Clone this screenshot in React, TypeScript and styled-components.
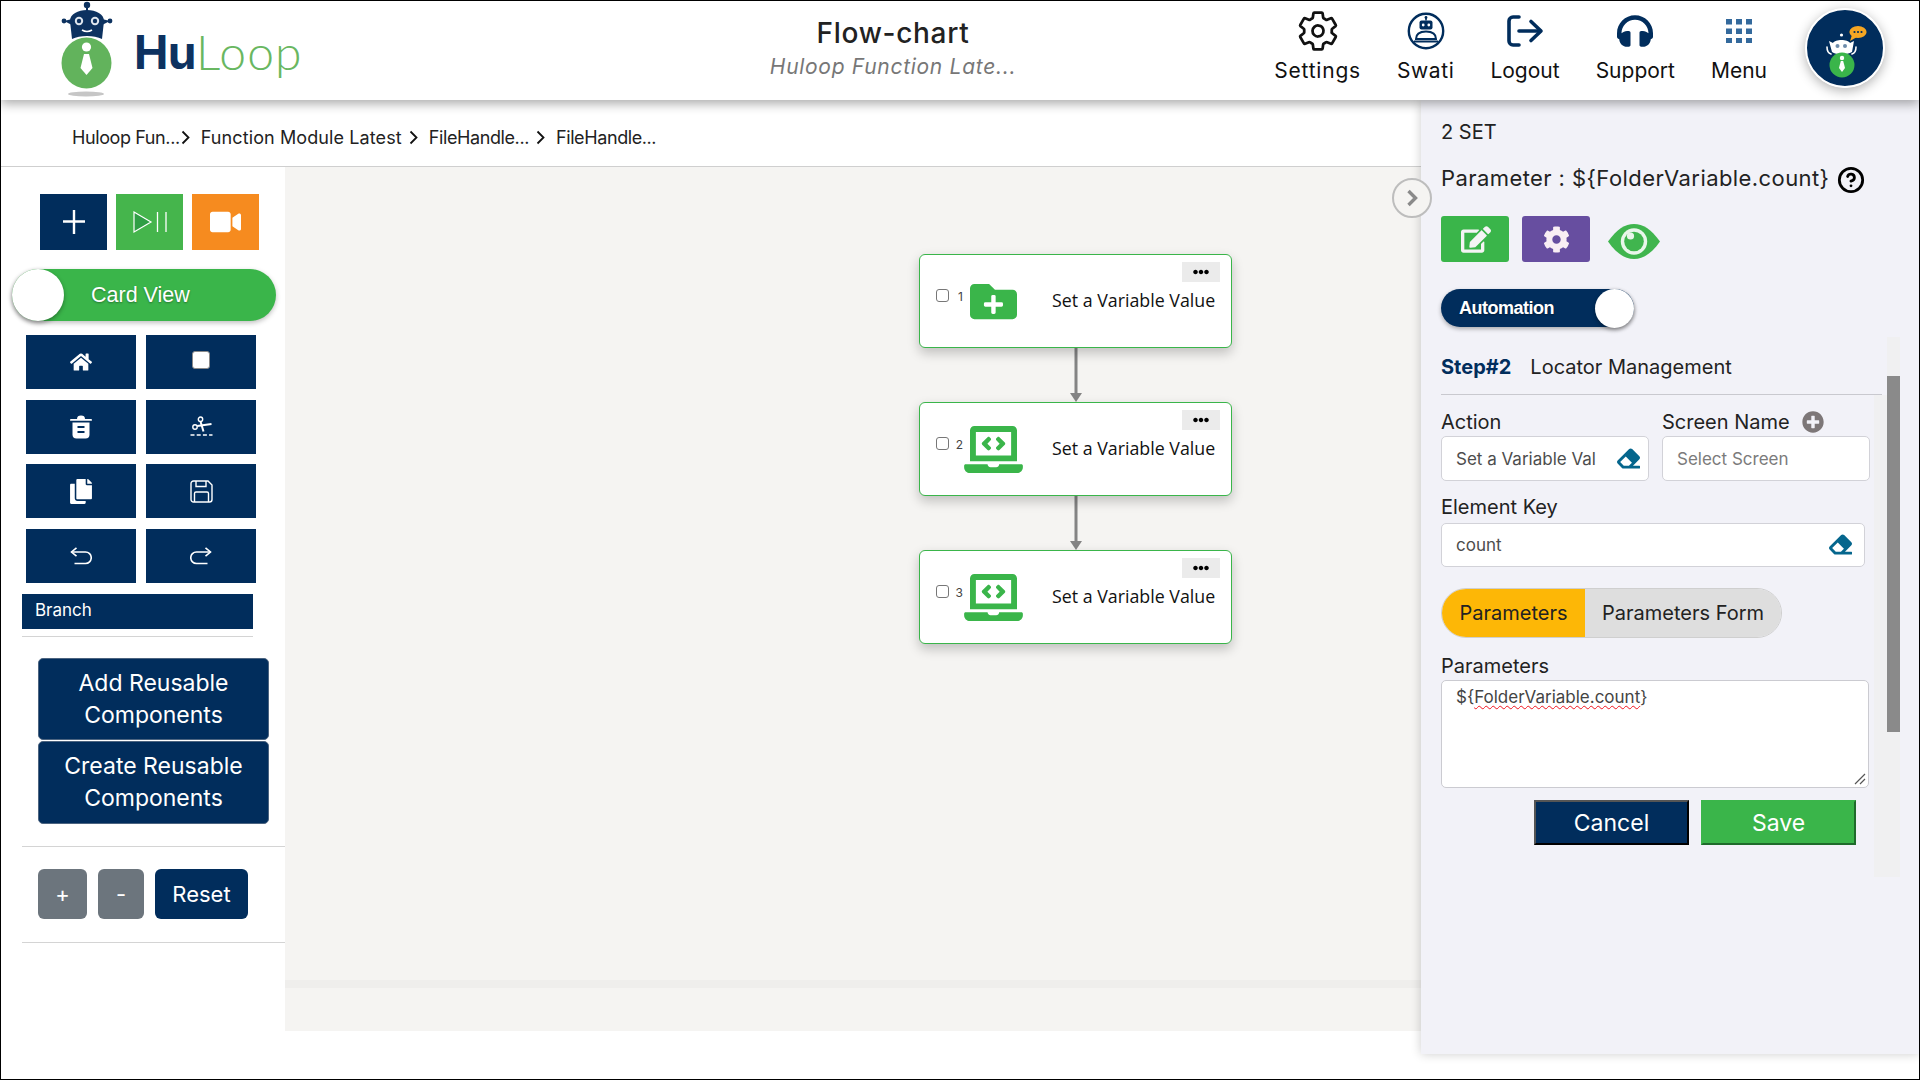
import React from "react"
import styled, { createGlobalStyle } from "styled-components"
import { FaCog, FaCopy, FaEdit, FaEllipsisH, FaEraser, FaFolderPlus, FaHeadphones, FaHome, FaLaptopCode, FaPlusCircle, FaVideo } from "react-icons/fa"
import { IoSettingsOutline } from "react-icons/io5"
import { CircleHelp } from "lucide-react"

const NAVY = "#012d5c"
const GREEN = "#3ab54a"

const GlobalStyle = createGlobalStyle`
  html, body { margin: 0; padding: 0; background: #fff; }
  body { font-family: Inter, "Noto Sans", sans-serif; color: #222; }
  * { box-sizing: border-box; }
`

const Frame = styled.div`
  width: 1920px;
  height: 1080px;
  border: 1px solid #000;
  background: #fff;
  display: flex;
  flex-direction: column;
  overflow: hidden;
`

/* header */
const Header = styled.header`
  height: 99px;
  flex: none;
  display: flex;
  position: relative;
  z-index: 3;
  background: #fff;
  box-shadow: 0 4px 10px rgba(0, 0, 0, 0.32);
`
const Brand = styled.div`
  width: 642px;
  flex: none;
  padding-left: 57px;
  display: flex;
  align-items: flex-start;
`
const BrandName = styled.div`
  margin: 24px 0 0 19px;
  font-size: 46px;
  line-height: 54px;
  display: flex;
`
const BrandHu = styled.span`
  color: #0d3260;
  font-weight: 700;
  letter-spacing: -0.5px;
`
const BrandLoop = styled.span`
  font-family: Lato, sans-serif;
  color: #69b761;
  font-weight: 300;
  font-size: 48px;
  letter-spacing: 1.2px;
`
const TitleBlock = styled.div`
  width: 500px;
  flex: none;
  text-align: center;
  padding-top: 16px;
`
const PageTitle = styled.div`
  font-size: 28px;
  line-height: 32px;
  font-weight: 500;
  letter-spacing: 0.7px;
  color: #222;
`
const PageSub = styled.div`
  margin-top: 2px;
  font-size: 21px;
  line-height: 32px;
  font-style: italic;
  letter-spacing: 0.7px;
  color: #777;
`
const Nav = styled.nav`
  margin-left: auto;
  display: flex;
  gap: 36px;
  padding-top: 10px;
`
const NavItem = styled.div`
  display: flex;
  flex-direction: column;
  align-items: center;
`
const NavIconBox = styled.div`
  height: 40px;
  display: flex;
  align-items: center;
  justify-content: center;
`
const NavLabel = styled.div<{ $spread?: number }>`
  margin-top: 6px;
  font-size: 21px;
  line-height: 28px;
  letter-spacing: ${({ $spread }) => $spread ?? 0}px;
  color: #111;
`
const GearIcon = styled(IoSettingsOutline)`
  width: 44px;
  height: 44px;
  color: #111;
`
const HeadphoneIcon = styled(FaHeadphones)`
  width: 36px;
  height: 36px;
  color: ${NAVY};
`
const Avatar = styled.svg`
  width: 80px;
  height: 80px;
  margin: 7px 34px 0 38px;
  flex: none;
  border-radius: 50%;
  box-shadow: 0 3px 12px rgba(0, 0, 0, 0.3);
`

/* page body */
const Body = styled.div`
  flex: 1;
  display: flex;
  align-items: flex-start;
  min-height: 0;
`
const Main = styled.div`
  width: 1420px;
  flex: none;
`
const Breadcrumbs = styled.div`
  height: 67px;
  padding: 9px 0 0 71px;
  display: flex;
  align-items: center;
  border-bottom: 1px solid #cfcfcf;
`
const Crumb = styled.span<{ $short?: boolean }>`
  font-size: 18px;
  line-height: 24px;
  color: #222;
  letter-spacing: ${({ $short }) => ($short ? "-0.4px" : "0.1px")};
`
const CrumbChevron = styled.svg<{ $tight?: boolean }>`
  width: 9px;
  height: 15px;
  margin: 0 11px 0 ${({ $tight }) => ($tight ? "1px" : "7px")};
  flex: none;
`
const Workspace = styled.div`
  display: flex;
  height: 864px;
`

/* left tools */
const Sidebar = styled.aside`
  width: 284px;
  flex: none;
  background: #fff;
`
const RunRow = styled.div`
  margin: 27px 0 0 39px;
  display: flex;
  gap: 9px;
`
const RunButton = styled.button<{ $bg: string }>`
  width: 67px;
  height: 56px;
  border: none;
  padding: 0;
  background: ${({ $bg }) => $bg};
  display: flex;
  align-items: center;
  justify-content: center;
`
const VideoIcon = styled(FaVideo)`
  width: 31px;
  height: 28px;
  color: #fff;
`
const ViewToggle = styled.div`
  margin: 19px 0 0 11px;
  width: 264px;
  height: 52px;
  border-radius: 26px;
  background: ${GREEN};
  display: flex;
  align-items: center;
  box-shadow: 0 2px 5px rgba(0, 0, 0, 0.25);
`
const ToggleKnob = styled.div<{ $size: number }>`
  width: ${({ $size }) => $size}px;
  height: ${({ $size }) => $size}px;
  flex: none;
  border-radius: 50%;
  background: #fff;
  box-shadow: 0 2px 4px rgba(0, 0, 0, 0.35);
`
const ToggleLabel = styled.span`
  margin-left: 27px;
  font-family: "Liberation Sans", Arial, sans-serif;
  font-size: 21.5px;
  color: #fff;
  text-shadow: 0 1px 2px rgba(0, 0, 0, 0.35);
`
const ToolGrid = styled.div`
  margin: 14px 0 0 25px;
  display: grid;
  grid-template-columns: 110px 110px;
  grid-auto-rows: 54px;
  column-gap: 10px;
  row-gap: 10.67px;
`
const ToolButton = styled.button`
  border: none;
  padding: 0;
  background: ${NAVY};
  display: flex;
  align-items: center;
  justify-content: center;
`
const HomeIcon = styled(FaHome)`
  width: 22px;
  height: 20px;
  color: #fff;
`
const StopBox = styled.span`
  width: 18px;
  height: 18px;
  margin-bottom: 4px;
  background: #fff;
  border: 1px solid #8a8a8a;
  border-radius: 3px;
`
const CopyIcon = styled(FaCopy)`
  width: 22px;
  height: 25px;
  color: #fff;
`
const FlipSvg = styled.svg<{ $flip?: boolean }>`
  width: 22px;
  height: 18px;
  transform: ${({ $flip }) => ($flip ? "scaleX(-1)" : "none")};
`
const BranchBar = styled.div`
  margin: 11px 0 0 21px;
  width: 231px;
  height: 35px;
  padding-left: 13px;
  background: ${NAVY};
  color: #fff;
  font-size: 17px;
  line-height: 33px;
`
const SideRule = styled.div<{ $width: number; $top: number }>`
  width: ${({ $width }) => $width}px;
  height: 1px;
  margin: ${({ $top }) => $top}px 0 0 21px;
  background: #d4d4d4;
`
const ReusableButton = styled.button<{ $top: number; $height: number }>`
  display: block;
  width: 231px;
  height: ${({ $height }) => $height}px;
  margin: ${({ $top }) => $top}px 0 0 37px;
  padding: 0 16px;
  border: 1px solid #4c6480;
  border-radius: 5px;
  background: ${NAVY};
  color: #fff;
  font-family: inherit;
  font-size: 23px;
  line-height: 32px;
`
const ZoomRow = styled.div`
  margin: 22px 0 0 37px;
  display: flex;
  gap: 11px;
`
const ZoomButton = styled.button<{ $width: number; $bg: string }>`
  width: ${({ $width }) => $width}px;
  height: 50px;
  border: none;
  border-radius: 6px;
  padding: 0;
  background: ${({ $bg }) => $bg};
  color: #fff;
  font-family: inherit;
  font-size: 22px;
`

/* canvas */
const Canvas = styled.div`
  flex: 1;
  background: #f5f4f2;
  position: relative;
`
const NodeArea = styled.div`
  height: 813px;
  padding: 87px 0 0 634px;
  display: flex;
  flex-direction: column;
  align-items: flex-start;
`
const ScrollBand = styled.div`
  height: 8px;
  background: #efeeec;
`
const NodeCard = styled.div`
  position: relative;
  width: 313px;
  height: 94px;
  flex: none;
  display: flex;
  align-items: center;
  padding-left: 16px;
  background: #fff;
  border: 1px solid ${GREEN};
  border-radius: 6px;
  box-shadow: 0 5px 12px rgba(0, 0, 0, 0.22);
`
const NodeCheck = styled.span`
  width: 13px;
  height: 13px;
  margin-bottom: 11px;
  flex: none;
  border: 1.5px solid #777;
  border-radius: 3px;
  background: #fff;
`
const NodeNumber = styled.span`
  width: 14px;
  margin-bottom: 9px;
  flex: none;
  text-align: right;
  font-size: 12px;
  color: #444;
`
const NodeIconBox = styled.div`
  width: 61px;
  flex: none;
  display: flex;
  justify-content: center;
`
const FolderIcon = styled(FaFolderPlus)`
  width: 47px;
  height: 47px;
  color: ${GREEN};
`
const LaptopIcon = styled(FaLaptopCode)`
  width: 59px;
  height: 47px;
  color: ${GREEN};
`
const NodeTitle = styled.span`
  margin: 0 0 2px 28px;
  font-family: "Open Sans", sans-serif;
  font-size: 17.8px;
  color: #111;
  white-space: nowrap;
`
const NodeMenu = styled.div`
  position: absolute;
  top: 7px;
  right: 11px;
  width: 38px;
  height: 20px;
  background: #ebebeb;
  display: flex;
  align-items: center;
  justify-content: center;
`
const DotsIcon = styled(FaEllipsisH)`
  width: 16px;
  height: 16px;
  color: #000;
`
const Connector = styled.svg`
  width: 14px;
  height: 54px;
  flex: none;
  margin-left: 149.5px;
  display: block;
`
const CollapseButton = styled.div`
  position: absolute;
  top: 11px;
  right: -11px;
  z-index: 2;
  width: 40px;
  height: 40px;
  border: 2px solid #bdbdbd;
  border-radius: 50%;
  background: #f5f4f2;
  display: flex;
  align-items: center;
  justify-content: center;
`

/* right panel */
const Panel = styled.section`
  width: 498px;
  height: 954px;
  flex: none;
  position: relative;
  z-index: 1;
  padding-top: 18px;
  background: #f2f2f8;
  box-shadow: 0 0 10px rgba(0, 0, 0, 0.2);
`
const PanelHead = styled.div`
  padding-left: 20px;
`
const StepTitle = styled.div`
  font-size: 20px;
  line-height: 28px;
  color: #222;
`
const ParameterRow = styled.div`
  margin-top: 17px;
  height: 30px;
  display: flex;
  align-items: center;
  font-size: 22px;
  line-height: 30px;
  letter-spacing: 0.42px;
  color: #222;
`
const HelpIcon = styled(CircleHelp)`
  width: 28px;
  height: 28px;
  margin: 3px 0 0 8px;
  color: #000;
`
const ActionRow = styled.div`
  margin-top: 23px;
  display: flex;
  gap: 13px;
`
const ActionButton = styled.button<{ $bg: string }>`
  width: 68px;
  height: 46px;
  border: none;
  border-radius: 3px;
  padding: 0;
  background: ${({ $bg }) => $bg};
  display: flex;
  align-items: center;
  justify-content: center;
`
const EditIcon = styled(FaEdit)`
  width: 30px;
  height: 27px;
  margin-left: 2px;
  color: #f4f4f4;
`
const CogIcon = styled(FaCog)`
  width: 27px;
  height: 27px;
  color: #f9eef4;
`
const EyeSvg = styled.svg`
  width: 52px;
  height: 35px;
  margin: 8px 0 0 5px;
`
const AutomationToggle = styled.div`
  margin-top: 27px;
  width: 193px;
  height: 38px;
  border-radius: 19px;
  background: ${NAVY};
  display: flex;
  align-items: center;
  justify-content: space-between;
  padding-left: 18px;
  box-shadow: 0 2px 4px rgba(0, 0, 0, 0.3);
`
const AutomationLabel = styled.span`
  font-family: "Liberation Sans", Arial, sans-serif;
  font-size: 18px;
  font-weight: 700;
  letter-spacing: -0.5px;
  color: #fff;
  text-shadow: 0 1px 2px rgba(0, 0, 0, 0.4);
`
const Scroller = styled.div`
  margin-top: 10px;
  height: 540px;
  display: flex;
`
const FormColumn = styled.div`
  width: 453px;
  flex: none;
  padding: 15px 0 0 20px;
`
const StepRow = styled.div`
  display: flex;
  gap: 19px;
  font-size: 20px;
  line-height: 30px;
`
const StepNumber = styled.span`
  color: ${NAVY};
  font-weight: 700;
`
const StepRule = styled.div`
  width: 441px;
  height: 1px;
  margin-top: 12px;
  background: #c9c9cf;
`
const TwoColumns = styled.div`
  margin-top: 13px;
  display: flex;
  gap: 13px;
`
const FieldColumn = styled.div`
  width: 208px;
  flex: none;
`
const FieldLabel = styled.div<{ $top?: number }>`
  margin-top: ${({ $top }) => $top ?? 0}px;
  height: 28px;
  display: flex;
  align-items: center;
  font-size: 20px;
  line-height: 28px;
  color: #222;
`
const AddScreenIcon = styled(FaPlusCircle)`
  width: 22px;
  height: 22px;
  margin-left: 12px;
  color: #7d7778;
`
const InputBox = styled.div<{ $width: number; $height: number; $top?: number; $end: number }>`
  width: ${({ $width }) => $width}px;
  height: ${({ $height }) => $height}px;
  margin-top: ${({ $top }) => $top ?? 0}px;
  padding: 0 ${({ $end }) => $end}px 0 14px;
  display: flex;
  align-items: center;
  justify-content: space-between;
  background: #fff;
  border: 1px solid #d2d2d8;
  border-radius: 5px;
`
const InputText = styled.span<{ $muted?: boolean }>`
  font-size: 17px;
  color: ${({ $muted }) => ($muted ? "#7b7b7b" : "#4d4d4d")};
`
const EraserIcon = styled(FaEraser)`
  width: 23px;
  height: 23px;
  margin-top: -1px;
  color: #05668d;
`
const Tabs = styled.div`
  margin-top: 21px;
  width: 341px;
  height: 50px;
  display: flex;
  border: 1px solid #cfcfcf;
  border-radius: 25px;
  overflow: hidden;
`
const Tab = styled.div<{ $active?: boolean }>`
  flex: ${({ $active }) => ($active ? "none" : 1)};
  width: ${({ $active }) => ($active ? "143px" : "auto")};
  display: flex;
  align-items: center;
  justify-content: center;
  background: ${({ $active }) => ($active ? "#fdb706" : "#dedede")};
  font-size: 20px;
  color: #222;
`
const TextArea = styled.div`
  position: relative;
  width: 428px;
  height: 108px;
  padding: 4px 14px;
  background: #fff;
  border: 1px solid #cbcbd1;
  border-radius: 5px;
  font-size: 17px;
  line-height: 24px;
  color: #444;
`
const Misspelled = styled.span`
  text-decoration: underline wavy #f0141e;
  text-decoration-thickness: 1px;
  text-underline-offset: 2px;
`
const ResizeGrip = styled.svg`
  position: absolute;
  right: 2px;
  bottom: 2px;
  width: 12px;
  height: 12px;
`
const ButtonRow = styled.div`
  margin: 12px 0 0 93px;
  display: flex;
  gap: 12px;
`
const FormButton = styled.button<{ $bg: string; $light: string; $dark: string }>`
  width: 155px;
  height: 45px;
  padding: 0;
  background: ${({ $bg }) => $bg};
  border-style: solid;
  border-width: 2px;
  border-color: ${({ $light }) => $light} ${({ $dark }) => $dark} ${({ $dark }) => $dark} ${({ $light }) => $light};
  color: #fff;
  font-family: inherit;
  font-size: 23px;
`
const Gutter = styled.div`
  width: 13px;
  margin-top: 58px;
  flex: none;
  background: #f0f0f1;
`
const ScrollTrack = styled.div`
  width: 13px;
  flex: none;
  padding-top: 39px;
  background: #f0f0f1;
`
const ScrollThumb = styled.div`
  height: 356px;
  background: #8a8a8a;
`

const LogoMark = () => (
  <svg width="57" height="98" viewBox="0 0 57 98" style={{ flex: "none" }}>
    <g fill="#0d3260">
      <circle cx="29" cy="4" r="3.2" />
      <rect x="28" y="5" width="2" height="6" />
      <circle cx="6" cy="20" r="2.4" />
      <circle cx="52" cy="20" r="2.4" />
      <path d="M6 20 L14 18 L14 24Z M52 20 L44 18 L44 24Z" />
      <path d="M12 20 C12 13 20 9 29 9 C38 9 46 13 46 20 L44 38 C36 34 22 34 14 38Z" />
    </g>
    <circle cx="21" cy="20" r="4.2" fill="#dfe6ee" />
    <circle cx="37" cy="20" r="4.2" fill="#dfe6ee" />
    <circle cx="21" cy="20" r="2.2" fill="#0d3260" />
    <circle cx="37" cy="20" r="2.2" fill="#0d3260" />
    <path d="M24 29 Q29 32 34 29" fill="none" stroke="#fff" strokeWidth="1.6" />
    <ellipse cx="28.5" cy="62" rx="25" ry="25.5" fill="#62b35c" />
    <circle cx="28.5" cy="46" r="4.6" fill="#fff" />
    <path d="M26 53 H31 L34.5 67 L28.5 74 L22.5 67Z" fill="#fff" />
    <ellipse cx="28" cy="93" rx="18" ry="2.4" fill="#c6c6c6" />
  </svg>
)

const RobotBadge = () => (
  <svg width="38" height="38" viewBox="0 0 38 38">
    <circle cx="19" cy="19" r="17.2" fill="#fff" stroke={NAVY} strokeWidth="2.4" />
    <rect x="18.2" y="5.5" width="1.6" height="3" fill={NAVY} />
    <circle cx="19" cy="5.5" r="1.4" fill={NAVY} />
    <rect x="12.5" y="8.5" width="13" height="9" rx="2" fill={NAVY} />
    <circle cx="16.2" cy="13" r="1.4" fill="#fff" />
    <circle cx="21.8" cy="13" r="1.4" fill="#fff" />
    <path d="M9 27 C9 21 14 19.5 19 19.5 C24 19.5 29 21 29 27Z" fill="none" stroke={NAVY} strokeWidth="2" />
    <path d="M7 29.5 H31" stroke={NAVY} strokeWidth="2" />
  </svg>
)

const LogoutMark = () => (
  <svg width="37" height="32" viewBox="0 0 37 32" fill="none" stroke={NAVY} strokeWidth="3.6" strokeLinecap="round" strokeLinejoin="round">
    <path d="M12 2 H6 A4 4 0 0 0 2 6 V26 A4 4 0 0 0 6 30 H12" />
    <path d="M12 16 H33" />
    <path d="M24 6.5 L34 16 L24 25.5" />
  </svg>
)

const MenuGrid = () => (
  <svg width="26" height="24" viewBox="0 0 26 24" fill="#33699c">
    {[0, 9.5, 19].map((y) =>
      [0, 10, 20].map((x) => <rect key={`${x}-${y}`} x={x} y={y} width="6" height="5.5" />)
    )}
  </svg>
)

const AssistantAvatar = () => (
  <Avatar viewBox="0 0 80 80">
    <circle cx="40" cy="40" r="39" fill={NAVY} stroke="#fff" strokeWidth="2" />
    <ellipse cx="53" cy="24" rx="8.6" ry="6" fill="#f5a623" />
    <path d="M47 27 L45 33 L52 29Z" fill="#f5a623" />
    <g fill={NAVY}>
      <circle cx="49.5" cy="24" r="1.1" />
      <circle cx="53" cy="24" r="1.1" />
      <circle cx="56.5" cy="24" r="1.1" />
    </g>
    <path d="M22 39 Q22 45 26 46 M51 39 Q51 45 47 46" fill="none" stroke="#fff" strokeWidth="1.6" strokeLinecap="round" />
    <circle cx="36.5" cy="27" r="1.6" fill="#fff" />
    <path d="M24 33 L28 35 C30 31 43 31 45 35 L49 33 L47 44 C42 47 31 47 27 44Z" fill="#fff" />
    <circle cx="32.5" cy="38" r="2" fill="#6d8cab" />
    <circle cx="40" cy="38" r="2" fill="#6d8cab" />
    <circle cx="37" cy="57" r="12.5" fill={GREEN} />
    <circle cx="37" cy="50" r="2.2" fill="#fff" />
    <path d="M35.8 53 H38.2 L40 60 L37 64 L34 60Z" fill="#fff" />
  </Avatar>
)

const Chevron = ({ tight }: { tight?: boolean }) => (
  <CrumbChevron $tight={tight} viewBox="0 0 9 15">
    <path d="M1.5 1.5 L7.5 7.5 L1.5 13.5" fill="none" stroke="#111" strokeWidth="1.8" />
  </CrumbChevron>
)

const PlusMark = () => (
  <svg width="24" height="26" viewBox="0 0 24 26">
    <path d="M12 1 V25 M1 12.5 H23" stroke="#fff" strokeWidth="2.4" />
  </svg>
)

const PlayPauseMark = () => (
  <svg width="36" height="24" viewBox="0 0 36 24" fill="none">
    <path d="M2 2 L19 12 L2 22Z" fill="#2f9e44" stroke="#fff" strokeWidth="1.2" />
    <path d="M25.5 2 V22 M34 2 V22" stroke="#fff" strokeWidth="1.3" />
  </svg>
)

const TrashMark = () => (
  <svg width="22" height="24" viewBox="0 0 22 24" fill="#fff">
    <path d="M7 4 A4 3.4 0 0 1 15 4Z" />
    <rect x="0" y="4" width="22" height="1.8" rx="0.9" />
    <path d="M2.5 7.5 H19.5 V19.5 A4 4 0 0 1 15.5 23.5 H6.5 A4 4 0 0 1 2.5 19.5Z" />
    <rect x="7.5" y="11" width="7" height="2" fill={NAVY} />
    <rect x="7.5" y="16" width="7" height="2" fill={NAVY} />
  </svg>
)

const CutMark = () => (
  <svg width="23" height="21" viewBox="0 0 23 21" fill="none" stroke="#fff">
    <circle cx="10.5" cy="3.2" r="2.2" strokeWidth="1.4" />
    <circle cx="5" cy="11" r="2.2" strokeWidth="1.4" />
    <path d="M10.5 5.5 L13.5 15.5" strokeWidth="2" />
    <path d="M7.2 10 L21.5 8" strokeWidth="2" />
    <path d="M0.5 19 H22.5" strokeWidth="1.6" strokeDasharray="4 2.2" />
  </svg>
)

const SaveMark = () => (
  <svg width="23" height="23" viewBox="0 0 23 23" fill="none" stroke="#fff" strokeWidth="1.4">
    <path d="M3.5 1 H18 L22 5 V19.5 A2.5 2.5 0 0 1 19.5 22 H3.5 A2.5 2.5 0 0 1 1 19.5 V3.5 A2.5 2.5 0 0 1 3.5 1Z" />
    <path d="M6 1 V6.5 H16 V1" />
    <path d="M4.5 22 V13.5 A1.5 1.5 0 0 1 6 12 H17 A1.5 1.5 0 0 1 18.5 13.5 V22" />
  </svg>
)

const TurnArrow = ({ flip }: { flip?: boolean }) => (
  <FlipSvg $flip={flip} viewBox="0 0 22 18" fill="none" stroke="#fff" strokeWidth="1.6">
    <path d="M1.5 5 H15.5 A5.7 5.7 0 0 1 15.5 16.5 H4.5" />
    <path d="M6.5 0.8 L1.5 5 L6.5 9.2" />
  </FlipSvg>
)

const EyeMark = () => (
  <EyeSvg viewBox="0 0 52 35">
    <path d="M0 17.5 C9 5 17 0 26 0 C35 0 43 5 52 17.5 C43 30 35 35 26 35 C17 35 9 30 0 17.5Z" fill="#40b54e" />
    <circle cx="26" cy="17.5" r="13.2" fill="#e9f6ea" />
    <circle cx="26" cy="17.5" r="9.8" fill="#40b54e" />
    <circle cx="22.5" cy="12" r="3.6" fill="#e9f6ea" />
  </EyeSvg>
)

const ArrowLink = () => (
  <Connector viewBox="0 0 14 54">
    <rect x="5.5" y="0" width="3" height="46" fill="#848484" />
    <path d="M1 45 H13 L7 54Z" fill="#848484" />
  </Connector>
)

const steps = [
  { id: 1, icon: <FolderIcon /> },
  { id: 2, icon: <LaptopIcon /> },
  { id: 3, icon: <LaptopIcon /> },
]

const toolIcons = [
  <HomeIcon key="home" />,
  <StopBox key="stop" />,
  <TrashMark key="trash" />,
  <CutMark key="cut" />,
  <CopyIcon key="copy" />,
  <SaveMark key="save" />,
  <TurnArrow key="undo" />,
  <TurnArrow key="redo" flip />,
]

export default function App() {
  return (
    <Frame>
      <GlobalStyle />
      <Header>
        <Brand>
          <LogoMark />
          <BrandName>
            <BrandHu>Hu</BrandHu>
            <BrandLoop>Loop</BrandLoop>
          </BrandName>
        </Brand>
        <TitleBlock>
          <PageTitle>Flow-chart</PageTitle>
          <PageSub>Huloop Function Late...</PageSub>
        </TitleBlock>
        <Nav>
          <NavItem>
            <NavIconBox><GearIcon /></NavIconBox>
            <NavLabel $spread={0.8}>Settings</NavLabel>
          </NavItem>
          <NavItem>
            <NavIconBox><RobotBadge /></NavIconBox>
            <NavLabel $spread={0.6}>Swati</NavLabel>
          </NavItem>
          <NavItem>
            <NavIconBox><LogoutMark /></NavIconBox>
            <NavLabel>Logout</NavLabel>
          </NavItem>
          <NavItem>
            <NavIconBox><HeadphoneIcon /></NavIconBox>
            <NavLabel>Support</NavLabel>
          </NavItem>
          <NavItem>
            <NavIconBox><MenuGrid /></NavIconBox>
            <NavLabel>Menu</NavLabel>
          </NavItem>
        </Nav>
        <AssistantAvatar />
      </Header>

      <Body>
        <Main>
          <Breadcrumbs>
            <Crumb $short>Huloop Fun...</Crumb>
            <Chevron tight />
            <Crumb>Function Module Latest</Crumb>
            <Chevron />
            <Crumb $short>FileHandle...</Crumb>
            <Chevron />
            <Crumb $short>FileHandle...</Crumb>
          </Breadcrumbs>
          <Workspace>
            <Sidebar>
              <RunRow>
                <RunButton $bg={NAVY}><PlusMark /></RunButton>
                <RunButton $bg="#45b54c"><PlayPauseMark /></RunButton>
                <RunButton $bg="#f68b1f"><VideoIcon /></RunButton>
              </RunRow>
              <ViewToggle>
                <ToggleKnob $size={52} />
                <ToggleLabel>Card View</ToggleLabel>
              </ViewToggle>
              <ToolGrid>
                {toolIcons.map((icon, i) => (
                  <ToolButton key={i}>{icon}</ToolButton>
                ))}
              </ToolGrid>
              <BranchBar>Branch</BranchBar>
              <SideRule $width={231} $top={7} />
              <ReusableButton $top={21} $height={82}>Add Reusable Components</ReusableButton>
              <ReusableButton $top={1} $height={83}>Create Reusable Components</ReusableButton>
              <SideRule $width={263} $top={22} />
              <ZoomRow>
                <ZoomButton $width={49} $bg="#6c757d">+</ZoomButton>
                <ZoomButton $width={46} $bg="#6c757d">-</ZoomButton>
                <ZoomButton $width={93} $bg={NAVY}>Reset</ZoomButton>
              </ZoomRow>
              <SideRule $width={263} $top={23} />
            </Sidebar>
            <Canvas>
              <NodeArea>
                {steps.map((step, i) => (
                  <React.Fragment key={step.id}>
                    {i > 0 && <ArrowLink />}
                    <NodeCard>
                      <NodeCheck />
                      <NodeNumber>{step.id}</NodeNumber>
                      <NodeIconBox>{step.icon}</NodeIconBox>
                      <NodeTitle>Set a Variable Value</NodeTitle>
                      <NodeMenu><DotsIcon /></NodeMenu>
                    </NodeCard>
                  </React.Fragment>
                ))}
              </NodeArea>
              <ScrollBand />
              <CollapseButton>
                <svg width="12" height="18" viewBox="0 0 12 18">
                  <path d="M2.5 2 L9.5 9 L2.5 16" fill="none" stroke="#8a8a8a" strokeWidth="3.4" />
                </svg>
              </CollapseButton>
            </Canvas>
          </Workspace>
        </Main>

        <Panel>
          <PanelHead>
            <StepTitle>2 SET</StepTitle>
            <ParameterRow>
              Parameter : ${"{"}FolderVariable.count{"}"}
              <HelpIcon strokeWidth={2.4} />
            </ParameterRow>
            <ActionRow>
              <ActionButton $bg={GREEN}><EditIcon /></ActionButton>
              <ActionButton $bg="#674ea0"><CogIcon /></ActionButton>
              <EyeMark />
            </ActionRow>
            <AutomationToggle>
              <AutomationLabel>Automation</AutomationLabel>
              <ToggleKnob $size={39} />
            </AutomationToggle>
          </PanelHead>
          <Scroller>
            <FormColumn>
              <StepRow>
                <StepNumber>Step#2</StepNumber>
                <span>Locator Management</span>
              </StepRow>
              <StepRule />
              <TwoColumns>
                <FieldColumn>
                  <FieldLabel>Action</FieldLabel>
                  <InputBox $width={208} $height={45} $end={8}>
                    <InputText>Set a Variable Val</InputText>
                    <EraserIcon />
                  </InputBox>
                </FieldColumn>
                <FieldColumn>
                  <FieldLabel>Screen Name<AddScreenIcon /></FieldLabel>
                  <InputBox $width={208} $height={45} $end={8}>
                    <InputText $muted>Select Screen</InputText>
                  </InputBox>
                </FieldColumn>
              </TwoColumns>
              <FieldLabel $top={12}>Element Key</FieldLabel>
              <InputBox $width={424} $height={44} $top={2} $end={12}>
                <InputText>count</InputText>
                <EraserIcon />
              </InputBox>
              <Tabs>
                <Tab $active>Parameters</Tab>
                <Tab>Parameters Form</Tab>
              </Tabs>
              <FieldLabel $top={14}>Parameters</FieldLabel>
              <TextArea>
                ${"{"}<Misspelled>FolderVariable.count</Misspelled>{"}"}
                <ResizeGrip viewBox="0 0 12 12">
                  <path d="M1 11 L11 1 M6 11 L11 6" stroke="#555" strokeWidth="1.2" />
                </ResizeGrip>
              </TextArea>
              <ButtonRow>
                <FormButton $bg={NAVY} $light="#555" $dark="#000">Cancel</FormButton>
                <FormButton $bg={GREEN} $light={GREEN} $dark="#1f6b2b">Save</FormButton>
              </ButtonRow>
            </FormColumn>
            <Gutter />
            <ScrollTrack>
              <ScrollThumb />
            </ScrollTrack>
          </Scroller>
        </Panel>
      </Body>
    </Frame>
  )
}
